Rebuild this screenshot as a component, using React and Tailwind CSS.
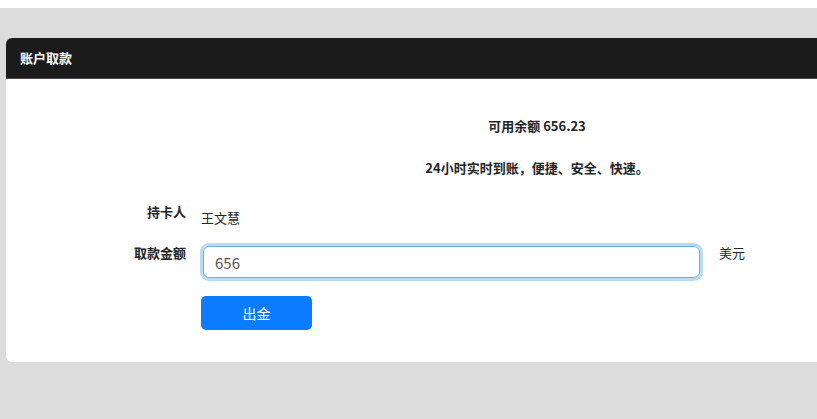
export default function App() {
  return (
    <div
      className="h-[419px] w-[817px] overflow-hidden bg-white text-[13px] text-[#212529]"
      style={{ fontFamily: '"Noto Sans CJK SC", "Noto Sans", sans-serif' }}
    >
      <div className="h-[8px] bg-white" />
      <div className="h-[411px] bg-[#dcdcdc] pl-[6px] pt-[30px]">
        {/* CARD */}
        <div className="w-[1062px] overflow-hidden rounded-[6px] bg-white">
          <header className="flex h-[41px] items-center border-b border-[#4a4a4a] bg-[#1b1b1b] px-[14px]">
            <h1 className="text-[13px] font-bold leading-5 text-white">账户取款</h1>
          </header>

          <div className="pb-[32px] pt-[37px]">
            <p className="text-center font-bold leading-5">可用余额 656.23</p>
            <p className="mt-[22px] text-center font-bold leading-5">
              24小时实时到账，便捷、安全、快速。
            </p>

            {/* FORM */}
            <div className="mt-[24px] flex items-start gap-[15px]">
              <label className="w-[180px] text-right font-bold leading-5">持卡人</label>
              <span className="pt-[6px] leading-5">王文慧</span>
            </div>

            <div className="mt-[15px] flex items-start gap-[15px]">
              <label className="w-[180px] text-right font-bold leading-5">取款金额</label>
              <input
                defaultValue="656"
                className="ml-[2px] mt-[3px] h-[32px] w-[497px] rounded-[6px] border border-[#66afe9] px-[11px] text-[15px] text-[#555] shadow-[0_0_0_3px_rgba(102,175,233,0.45)] outline-none"
              />
              <span className="ml-[4px] leading-5">美元</span>
            </div>

            <div className="mt-[18px] pl-[195px]">
              <button className="h-[34px] w-[111px] rounded-[5px] bg-[#0a7cff] text-[14px] text-white">
                出金
              </button>
            </div>
          </div>
        </div>
      </div>
    </div>
  );
}
